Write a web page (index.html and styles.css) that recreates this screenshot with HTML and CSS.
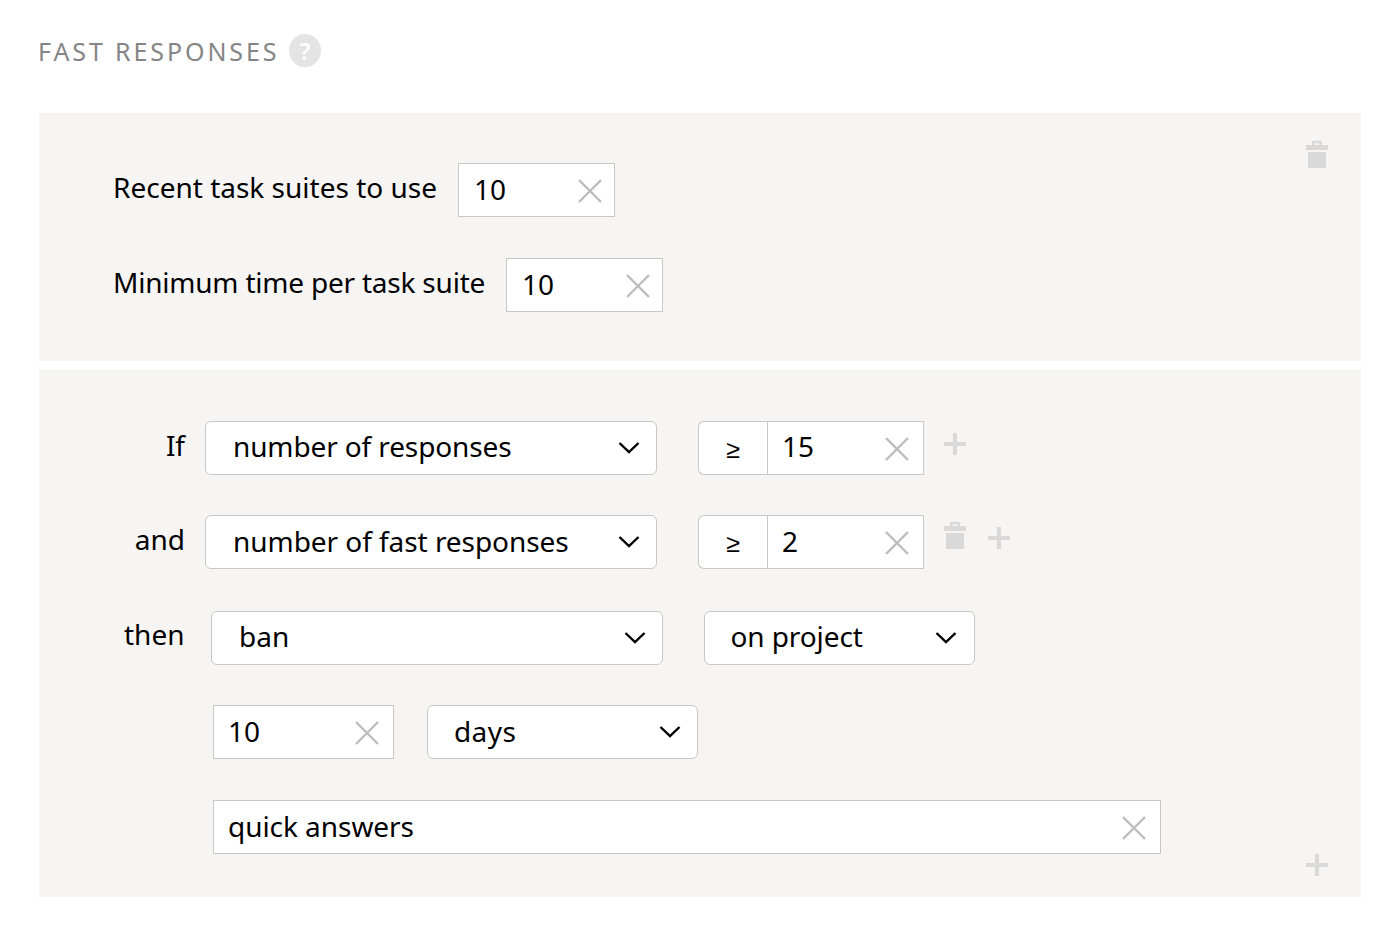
FILE: index.html
```html
<!DOCTYPE html>
<html lang="en">
<head>
<meta charset="utf-8">
<title>Fast responses</title>
<link rel="stylesheet" href="styles.css">
</head>
<body>
<svg class="defs" width="0" height="0">
  <symbol id="cross" viewBox="0 0 24 24"><path d="M1 1L23 23M23 1L1 23" fill="none" stroke="#bdbdbd" stroke-width="2.4"/></symbol>
  <symbol id="chevron" viewBox="0 0 22 14"><path d="M1.5 2L11 11.2L20.5 2" fill="none" stroke="#000" stroke-width="2.4"/></symbol>
  <symbol id="plus" viewBox="0 0 24 24"><path d="M1 12H23M12 1V23" fill="none" stroke="#d9d9d9" stroke-width="4.2"/></symbol>
  <symbol id="trash" viewBox="0 0 24 29"><path d="M8.3 6V2H15.7V6" fill="none" stroke="#d9d9d9" stroke-width="2.4"/><path d="M1 5H23V10H1ZM3 12H21V28H3Z" fill="#d9d9d9"/></symbol>
</svg>
<header class="header">
  <h1 class="title">FAST RESPONSES</h1>
  <span class="help">?</span>
</header>
<section class="panel settings">
  <div class="fields">
    <div class="field"><span class="label recent">Recent task suites to use</span><div class="input"><span class="num">10</span><svg class="cross"><use href="#cross"/></svg></div></div>
    <div class="field"><span class="label minimum">Minimum time per task suite</span><div class="input"><span class="num">10</span><svg class="cross"><use href="#cross"/></svg></div></div>
  </div>
  <svg class="trash"><use href="#trash"/></svg>
</section>
<section class="panel rules">
  <div class="rows">
    <div class="row">
      <span class="word">If</span>
      <div class="select wide"><span class="responses">number of responses</span><svg class="chevron"><use href="#chevron"/></svg></div>
      <div class="compare"><div class="operator">≥</div><div class="input"><span class="num">15</span><svg class="cross"><use href="#cross"/></svg></div></div>
      <div class="actions"><svg class="plus"><use href="#plus"/></svg></div>
    </div>
    <div class="row">
      <span class="word">and</span>
      <div class="select wide"><span class="fast">number of fast responses</span><svg class="chevron"><use href="#chevron"/></svg></div>
      <div class="compare"><div class="operator">≥</div><div class="input"><span class="num">2</span><svg class="cross"><use href="#cross"/></svg></div></div>
      <div class="actions"><svg class="trash"><use href="#trash"/></svg><svg class="plus"><use href="#plus"/></svg></div>
    </div>
    <div class="row then">
      <span class="word">then</span>
      <div class="select wide"><span>ban</span><svg class="chevron"><use href="#chevron"/></svg></div>
      <div class="select short"><span class="project">on project</span><svg class="chevron"><use href="#chevron"/></svg></div>
    </div>
    <div class="row detail">
      <div class="input period"><span class="num">10</span><svg class="cross"><use href="#cross"/></svg></div>
      <div class="select short"><span class="days">days</span><svg class="chevron"><use href="#chevron"/></svg></div>
    </div>
    <div class="row detail">
      <div class="input comment"><span class="quick">quick answers</span><svg class="cross"><use href="#cross"/></svg></div>
    </div>
  </div>
  <svg class="plus add"><use href="#plus"/></svg>
</section>
</body>
</html>
```
FILE: styles.css
```css
* { box-sizing: border-box; }
body {
  margin: 0;
  padding: 33px 39px 0;
  background: #fff;
  color: #000;
  font: 28px/36px "Noto Sans", sans-serif;
  white-space: nowrap;
}
svg { display: block; flex: none; }
.defs { position: absolute; }
.header { display: flex; align-items: center; gap: 10px; height: 35px; margin-bottom: 45px; }
.title { margin: 0 0 0 -1px; width: 241px; font-size: 25px; font-weight: 400; letter-spacing: 2.9px; color: #858585; }
.help {
  width: 32px; height: 33px; border-radius: 50%;
  background: #e4e4e4; color: #fff;
  font-size: 24px; font-weight: 600; line-height: 34px; text-align: center;
}
.panel { display: flex; justify-content: space-between; background: #f6f5f4; }
.settings { height: 248px; margin-bottom: 9px; padding: 50px 32px 0 74px; }
.settings > .trash { margin-top: -23px; }
.fields { display: flex; flex-direction: column; gap: 41px; }
.field { display: flex; }
.label { margin-top: 6px; }
.recent { width: 345px; }
.minimum { width: 393px; letter-spacing: -0.21px; }
.input {
  display: flex; align-items: center; justify-content: space-between;
  width: 157px; height: 54px; padding: 0 12px 0 15px;
  background: #fff; border: 1px solid #c8c8c8;
}
.cross { width: 24px; height: 24px; margin-top: 2px; }
.rules { height: 527px; padding: 50.5px 32px 0 0; }
.rows { display: flex; flex-direction: column; gap: 41px; }
.row { display: flex; height: 53.85px; }
.word { width: 146px; margin: 6px 20px 0 0; text-align: right; }
.select {
  display: flex; align-items: center; justify-content: space-between;
  height: 54px; padding: 0 16px 0 27px;
  background: #fff; border: 1px solid #c8c8c8; border-radius: 6px;
}
.select > span, .input > span { margin-top: -3px; }
.wide { width: 452px; margin-right: 41px; }
.short { width: 271px; }
.responses { letter-spacing: -0.12px; }
.fast { letter-spacing: -0.05px; }
.project { margin-left: -1px; letter-spacing: -0.1px; }
.days { margin-left: -1px; letter-spacing: 0.4px; }
.quick { margin-left: -1px; letter-spacing: -0.05px; }
.chevron { width: 22px; height: 14px; margin-right: 0.5px; }
.compare { display: flex; width: 226px; }
.compare .input { padding-left: 14px; }
.compare .cross, .period .cross, .comment .cross { margin-right: 2px; }
.operator {
  width: 69px; height: 54px; line-height: 52px; text-align: center; font-size: 25px;
  background: #fff; border: 1px solid #c8c8c8; border-right: 0; border-radius: 6px 0 0 6px;
}
.actions { display: flex; gap: 20px; padding: 7px 0 0 19px; }
.plus { width: 24px; height: 24px; margin-top: 4px; }
.trash { width: 24px; height: 29px; }
.actions .trash { margin-top: -1px; }
.then { margin: 0.4px 0 0; }
.then .word { margin: 5px 27px 0 -0.5px; }
.then .select { margin-left: -0.5px; }
.detail { padding-left: 174px; }
.period { width: 181px; margin-right: 33px; }
.period .num { margin-left: -1px; }
.comment { width: 948px; }
.add { margin-top: 432.5px; }
```
